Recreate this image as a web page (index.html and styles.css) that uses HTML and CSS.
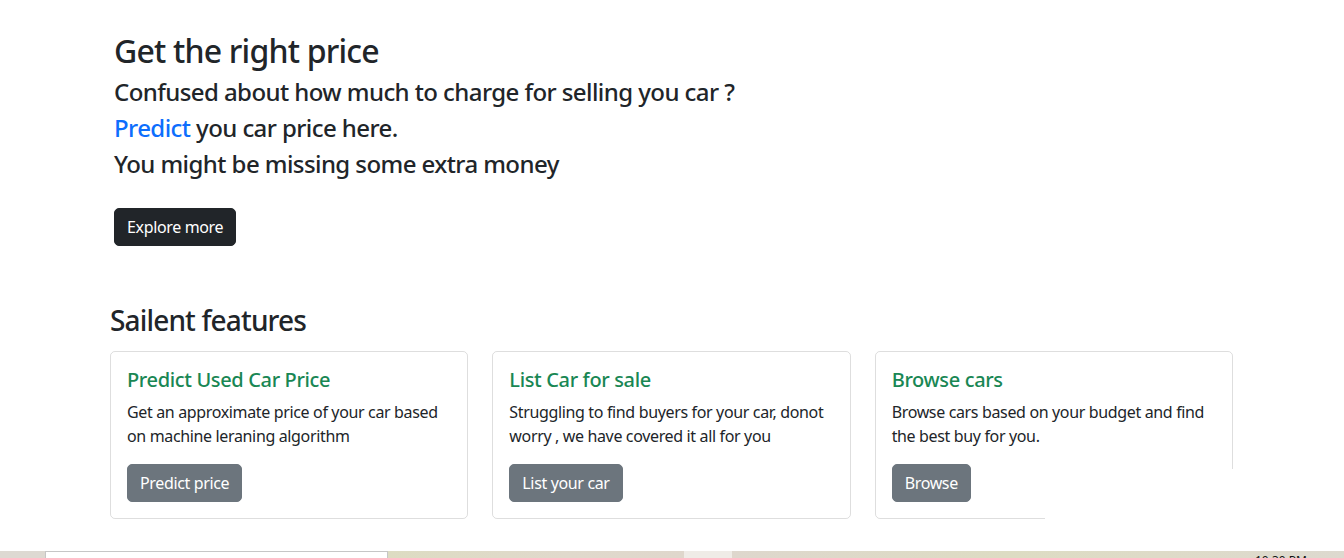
FILE: index.html
```html
<!DOCTYPE html>
<html lang="en">
<head>
<meta charset="utf-8">
<title>Get the right price</title>
<link rel="stylesheet" href="styles.css">
</head>
<body>
<main class="page">
  <section class="hero">
    <h2 class="hero-title">Get the right price</h2>
    <h4 class="hero-line">Confused about how much to charge for selling you car ?</h4>
    <h4 class="hero-line"><a class="link" href="#">Predict</a> you car price here.</h4>
    <h4 class="hero-line">You might be missing some extra money</h4>
    <a class="btn btn-dark" href="#">Explore more</a>
  </section>

  <section class="features">
    <h3 class="features-title">Sailent features</h3>
    <div class="cards">
      <div class="card">
        <h5 class="card-title">Predict Used Car Price</h5>
        <p class="card-text">Get an approximate price of your car based on machine leraning algorithm</p>
        <a class="btn btn-secondary" href="#">Predict price</a>
      </div>
      <div class="card">
        <h5 class="card-title">List Car for sale</h5>
        <p class="card-text">Struggling to find buyers for your car, donot worry , we have covered it all for you</p>
        <a class="btn btn-secondary" href="#">List your car</a>
      </div>
      <div class="card">
        <h5 class="card-title">Browse cars</h5>
        <p class="card-text">Browse cars based on your budget and find the best buy for you.</p>
        <a class="btn btn-secondary" href="#">Browse</a>
      </div>
    </div>
  </section>
</main>

<div class="cover"></div>

<div class="taskbar">
  <div class="tb-a"></div>
  <div class="tb-search"></div>
  <div class="tb-b"></div>
  <div class="tb-c"></div>
  <div class="tb-d"><span class="tb-clock">10:30 PM</span></div>
</div>
</body>
</html>
```

FILE: styles.css
```css
* { box-sizing: border-box; }

html, body {
  margin: 0;
  padding: 0;
  background: #fff;
}

body {
  font-family: "Noto Sans", "Open Sans", sans-serif;
  color: #212529;
  font-size: 16px;
  line-height: 1.5;
  letter-spacing: -0.022em;
  width: 1344px;
  height: 558px;
  overflow: hidden;
  position: relative;
}

.page {
  width: 1140px;
  margin: 0 auto;
  padding: 0 12px;
}

h2, h3, h4, h5, p { margin: 0; }

.hero {
  padding-top: 32px;
  display: flex;
  flex-direction: column;
  align-items: flex-start;
}

.hero-title {
  font-size: 32px;
  font-weight: 500;
  line-height: 38.4px;
  letter-spacing: -0.025em;
  margin-bottom: 8px;
}

.hero-line {
  font-size: 24px;
  font-weight: 500;
  line-height: 28px;
  letter-spacing: -0.024em;
  margin-bottom: 8px;
}

.link {
  color: #0d6efd;
  text-decoration: none;
}

.btn {
  display: inline-block;
  font-size: 16px;
  line-height: 24px;
  padding: 6px 12px;
  border: 1px solid transparent;
  border-radius: 5px;
  color: #fff;
  text-decoration: none;
}

.btn-dark {
  background: #212529;
  border-color: #212529;
  margin-top: 22px;
}

.btn-secondary {
  background: #6c757d;
  border-color: #6c757d;
}

.features {
  margin: 58px -4px 0;
}

.features-title {
  font-size: 28px;
  font-weight: 500;
  line-height: 33.6px;
  letter-spacing: -0.03em;
  margin-bottom: 13px;
}

.cards {
  display: grid;
  grid-template-columns: repeat(3, 1fr);
  gap: 24px;
  width: 1123px;
}

.card {
  border: 1px solid rgba(0, 0, 0, 0.13);
  border-radius: 5px;
  padding: 16px;
  display: flex;
  flex-direction: column;
  align-items: flex-start;
}

.card-title {
  font-size: 20px;
  font-weight: 500;
  line-height: 24px;
  color: #198754;
  margin-bottom: 8px;
}

.card-text {
  margin-bottom: 16px;
}

.cover {
  position: absolute;
  left: 1045px;
  top: 469px;
  width: 299px;
  height: 82px;
  background: #fff;
}

.taskbar {
  position: absolute;
  left: 0;
  top: 551px;
  width: 1344px;
  height: 7px;
  display: flex;
  overflow: hidden;
}

.tb-a {
  width: 45px;
  background: #ddd9d2;
}

.tb-search {
  width: 343px;
  background: #fff;
  border-top: 1px solid #c6c6c6;
  border-left: 1px solid #c6c6c6;
  border-right: 1px solid #c6c6c6;
}

.tb-b {
  width: 296px;
  background: linear-gradient(90deg, #dddcc2, #e0d9cc 60%, #dfd7cc);
}

.tb-c {
  width: 48px;
  background: #efece7;
}

.tb-d {
  flex: 1;
  position: relative;
  background: linear-gradient(90deg, #ded7cd, #dddcc3 45%, #dedbc8 70%, #ddd9cf);
}

.tb-clock {
  position: absolute;
  left: 523px;
  top: 4px;
  font-family: "Noto Sans", sans-serif;
  font-size: 12px;
  line-height: 12px;
  letter-spacing: 0;
  color: #111;
}
```
